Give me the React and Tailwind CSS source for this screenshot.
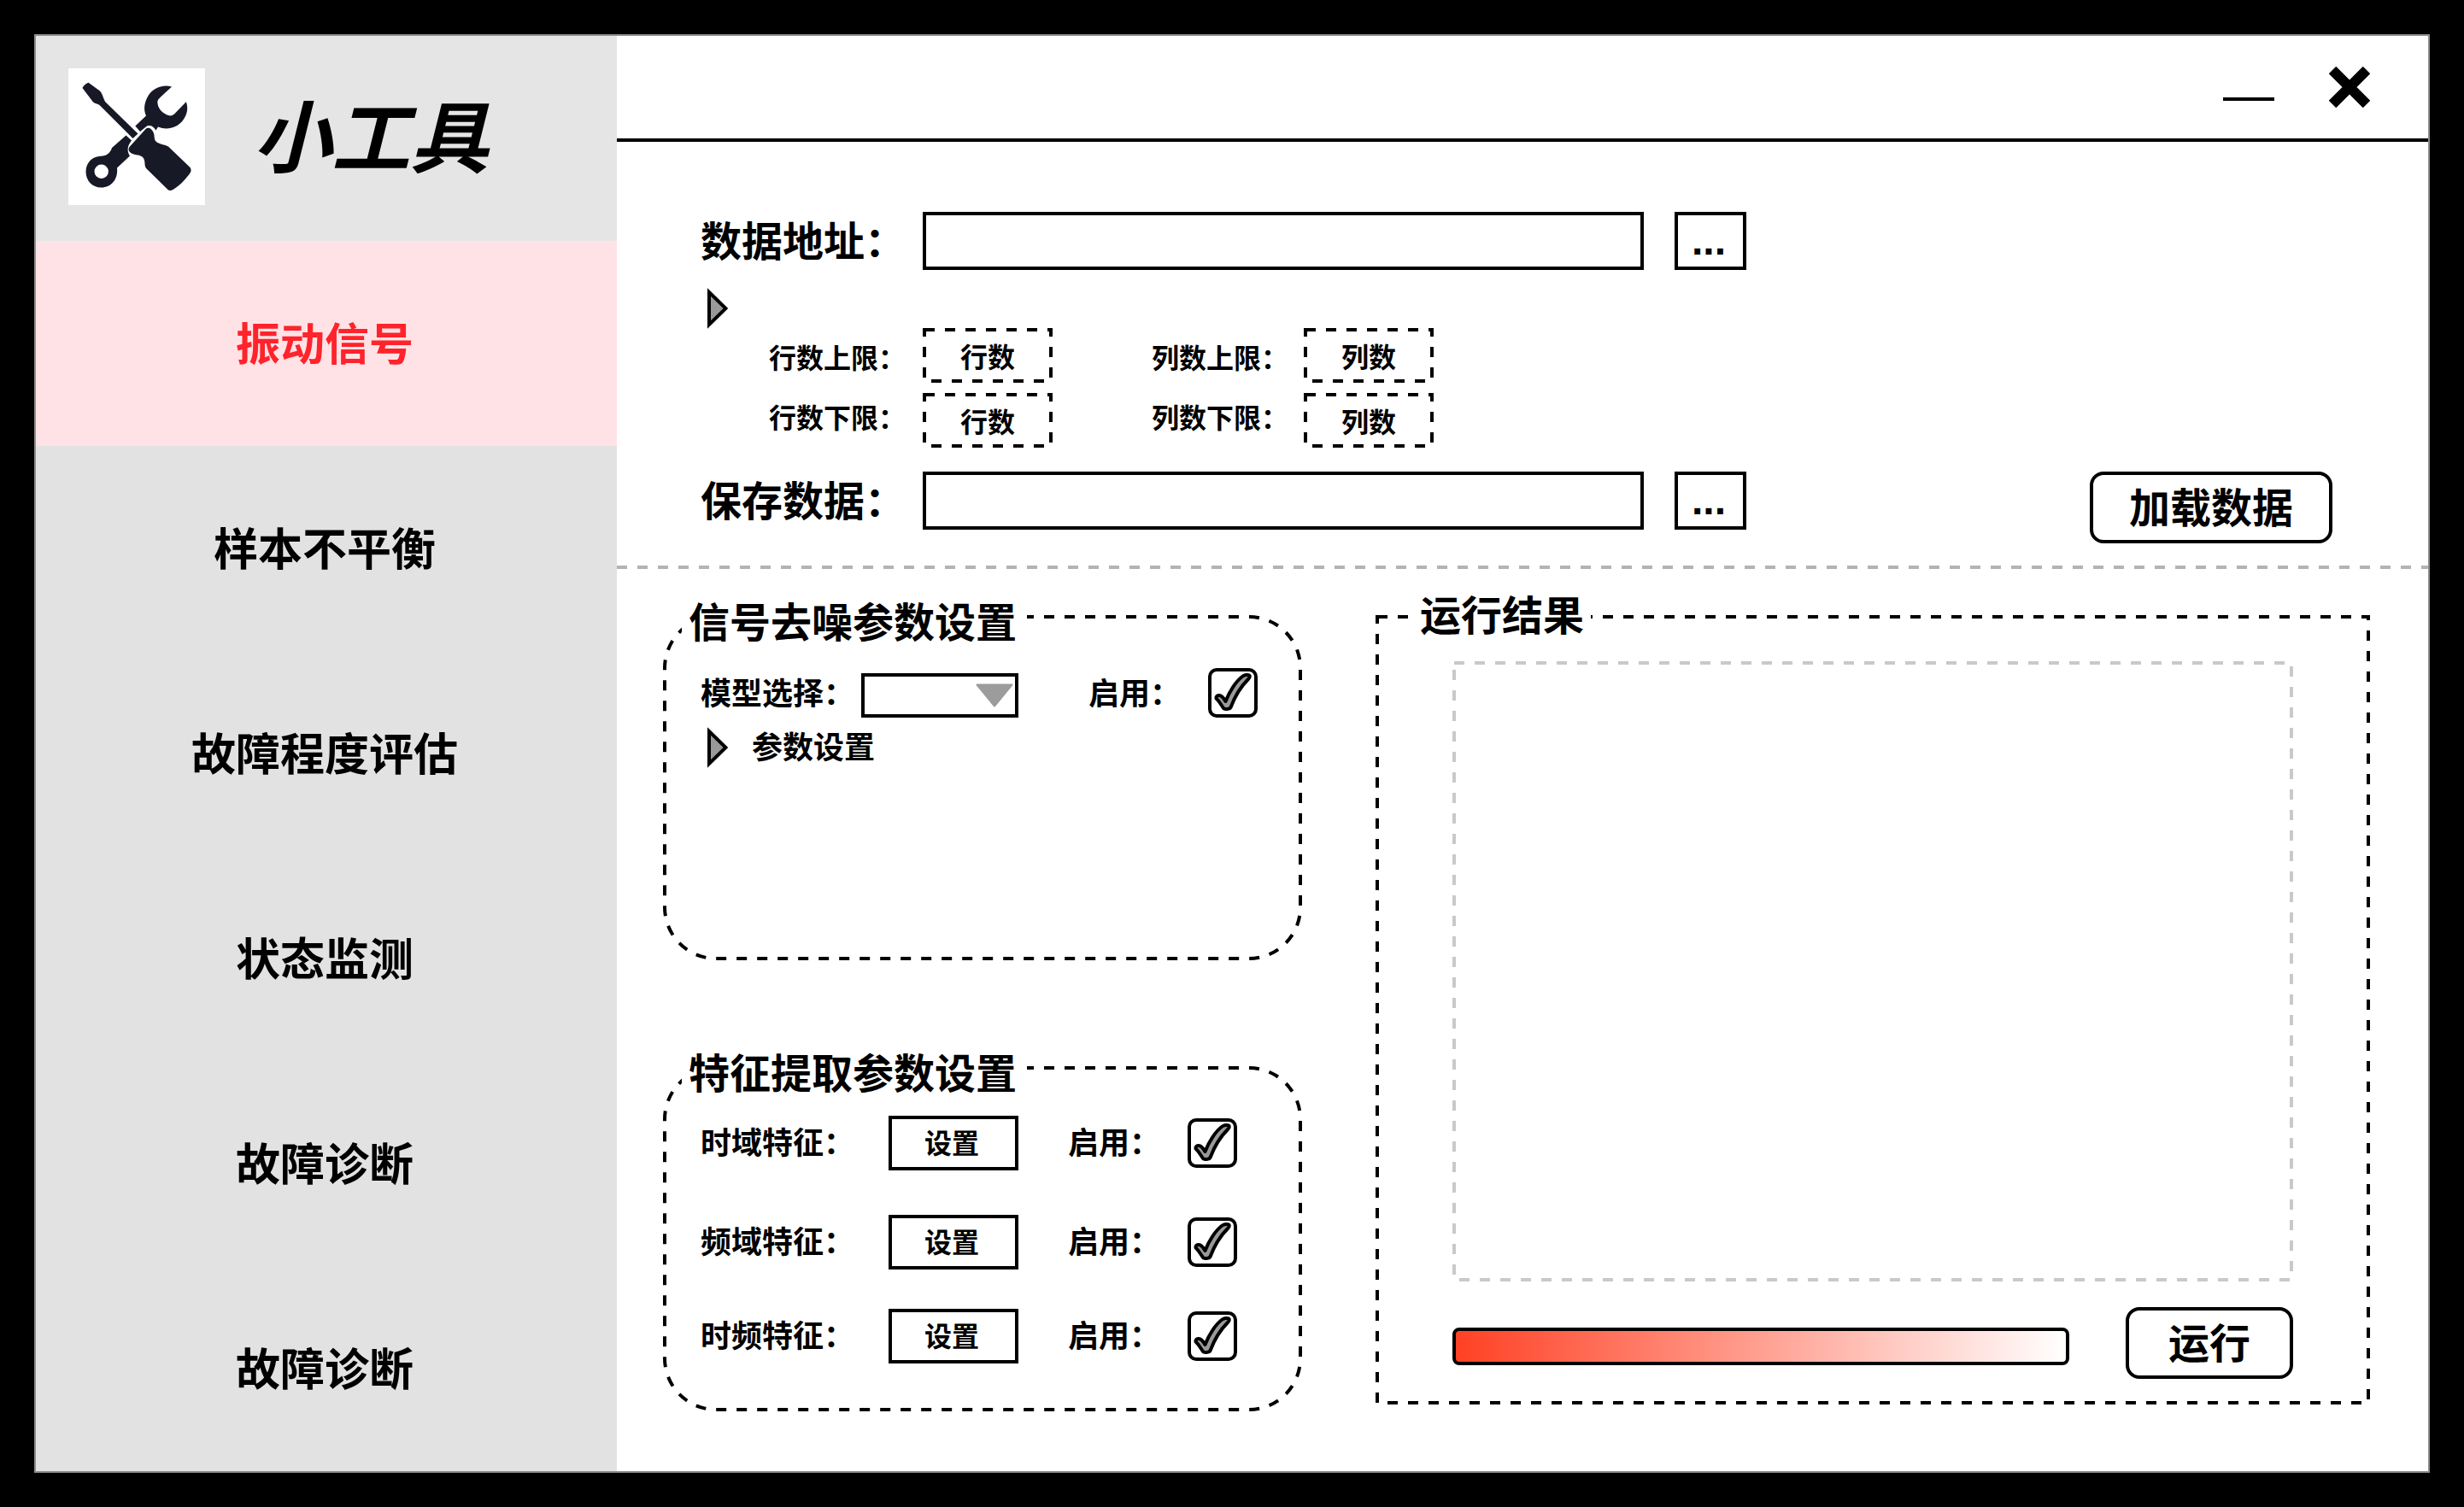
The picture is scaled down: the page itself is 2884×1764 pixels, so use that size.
import { useState } from "react";

const NAV_ITEMS = ["振动信号", "样本不平衡", "故障程度评估", "状态监测", "故障诊断", "故障诊断"];

const FEATURES = [
  { id: "time", label: "时域特征：" },
  { id: "frequency", label: "频域特征：" },
  { id: "time-frequency", label: "时频特征：" },
];

/* Dashed outline drawn around its positioned parent. */
function DashedOutline({ radius = 0, className = "stroke-black" }) {
  return (
    <svg aria-hidden="true" className={`pointer-events-none absolute inset-0 size-full ${className}`}>
      <rect
        x="2"
        y="2"
        rx={radius}
        fill="none"
        strokeWidth="4"
        strokeDasharray="12 12"
        style={{ width: "calc(100% - 4px)", height: "calc(100% - 4px)" }}
      />
    </svg>
  );
}

function ToolsLogo() {
  return (
    <svg viewBox="0 0 160 160" className="size-40 shrink-0 bg-white" role="img" aria-label="小工具">
      <g fill="#171926">
        <path d="M121 21.4C109 18.5 98 24 93 33C88.5 41 88 49 91 55.5L78.3 67.5L84 74L92 67.5C96 66 100 68 102.5 72.5L105 68.6C116 73 127 69.500 134 61C139.500 54 140.500 46 137.800 39.300L124 53.500C121.500 56 118 56 114.500 54C109 51 104.500 46.500 104.300 39.300C104.500 37 106 35.500 107.500 34Z" />
        <path
          fillRule="evenodd"
          d="M67.500 78.600L74 84.500C68 92 69 98 72 102.500L57 116.500C58.500 130 50 139.500 38.500 139.500C28 139.500 20.500 131.500 20.500 121C20.500 110.500 28 103 38 102.800C45 102.500 49 99 51 93ZM38.700 112.500A8.200 8.200 0 1 0 38.700 128.900A8.200 8.200 0 1 0 38.700 112.500Z"
        />
        <path d="M23.600 16.800L37 26.500C40.500 30 41 37 44 40L81.500 76.500L75.500 82L37 43.500C35 41.500 31.500 41.500 29 39.600L16.500 23C17.500 20.500 21 17.500 23.600 16.800Z" />
        <path d="M91 70.500C93.500 68.800 96.500 70 98.500 73C102 78.500 99.500 82.500 102.500 85.500C106 89 113 89 117 91.500L142.500 116C144.500 119 143.500 121.500 141.500 124C136 131 129.500 138 122 142.300C120 143.300 118 143.300 116.500 142L91 117C88.500 113.500 90.500 108 87.500 104.500C84 100.500 78.500 102 74 99.500C71 97.500 69.500 95.500 71.500 92Z" />
      </g>
    </svg>
  );
}

function Checkbox({ id }) {
  return (
    <span className="grid size-[58px] shrink-0">
      <input
        id={id}
        type="checkbox"
        defaultChecked
        className="peer col-start-1 row-start-1 size-full appearance-none rounded-[10px] border-4 border-black bg-white"
      />
      <svg
        aria-hidden="true"
        viewBox="0 0 58 58"
        className="pointer-events-none invisible col-start-1 row-start-1 size-full peer-checked:visible"
      >
        <path
          d="M12.500 32C15.500 31.500 18 34.500 20.500 39C25 27 33 15 40.500 9.500C42.500 8 46.500 7.500 48.300 8.500C49.500 9.500 48.500 11.500 47 13C38 22 31 34 26.500 46C25.500 48 21 48.500 18.500 47.500C15.500 44 13.500 39 9.500 35.500C9 33.500 10.500 32.300 12.500 32Z"
          fill="#999999"
          stroke="black"
          strokeWidth="4"
          strokeLinejoin="round"
        />
      </svg>
    </span>
  );
}

function DisclosureButton({ label }) {
  return (
    <button type="button" aria-label={label} aria-expanded="false" className="block shrink-0">
      <svg aria-hidden="true" viewBox="0 0 24 50" className="h-[50px] w-6">
        <path d="M2 6L21.500 25L2 44Z" fill="#999999" stroke="black" strokeWidth="4" strokeMiterlimit="10" />
      </svg>
    </button>
  );
}

function PathRow({ id, label }) {
  return (
    <div className="flex items-center">
      <label htmlFor={id} className="w-[260px] shrink-0 text-5xl/[64px]">
        {label}
      </label>
      <input id={id} type="text" className="h-[68px] min-w-0 flex-1 border-4 border-black bg-white px-4 text-[32px]" />
      <button
        type="button"
        aria-label={`${label}浏览`}
        className="ml-9 h-[68px] w-[84px] shrink-0 border-4 border-black bg-white pr-1 font-['Liberation_Sans',sans-serif] text-5xl/[60px]"
      >
        ...
      </button>
    </div>
  );
}

function LimitFields({ name, unit, labelClass }) {
  const limits = ["上限", "下限"];
  return (
    <div className="flex items-center text-[32px]">
      <div className={`flex shrink-0 flex-col ${labelClass}`}>
        {limits.map((limit) => (
          <label key={limit} htmlFor={`${name}-${limit}`} className="leading-[70px]">
            {unit}
            {limit}：
          </label>
        ))}
      </div>
      <div className="flex flex-col gap-3">
        {limits.map((limit) => (
          <div key={limit} className="relative">
            <input
              id={`${name}-${limit}`}
              type="text"
              defaultValue={unit}
              className="block h-16 w-[152px] bg-white text-center"
            />
            <DashedOutline />
          </div>
        ))}
      </div>
    </div>
  );
}

function Panel({ title, children }) {
  return (
    <section className="relative min-h-[404px] px-11">
      <DashedOutline radius={60} />
      <h2 className="relative -mx-[22px] -mt-4 w-fit bg-white pr-3 pl-2 text-5xl/[48px]">{title}</h2>
      {children}
    </section>
  );
}

export default function App() {
  const [active, setActive] = useState(0);

  return (
    <div className="flex min-h-screen bg-black p-10 font-['Noto_Sans','Noto_Sans_CJK_SC',sans-serif] font-bold text-black">
      <div className="grid flex-1 grid-cols-[17fr_53fr] border-2 border-[#8c8c8c] bg-white">
        <aside className="flex flex-col bg-[#e2e2e2]">
          <header className="flex flex-1 basis-0 flex-col justify-center bg-[#e5e5e5] pl-[38px]">
            <div className="flex items-center gap-14 pb-1">
              <ToolsLogo />
              <h1 className="text-[92px]/[92px] italic">小工具</h1>
            </div>
          </header>
          <nav className="flex flex-[6] basis-0 flex-col">
            {NAV_ITEMS.map((item, index) => (
              <button
                key={index}
                type="button"
                onClick={() => setActive(index)}
                aria-current={index === active ? "page" : undefined}
                className={`flex-1 pr-1 text-[52px]/[60px] ${index === active ? "bg-[#ffe2e5] text-[#ff232b]" : ""}`}
              >
                {item}
              </button>
            ))}
          </nav>
        </aside>

        <main className="flex min-w-0 flex-col">
          <header className="flex h-[124px] shrink-0 items-center justify-end gap-16 border-b-4 border-black pr-[68px]">
            <button type="button" aria-label="最小化" className="flex h-12 w-[60px] items-center pt-7">
              <span className="h-1 w-full bg-black" />
            </button>
            <button type="button" aria-label="关闭">
              <svg aria-hidden="true" viewBox="0 0 48 48" className="size-12">
                <path d="M4 4L44 44M44 4L4 44" stroke="black" strokeWidth="12" />
              </svg>
            </button>
          </header>

          <section className="flex items-end justify-between gap-10 pt-[82px] pr-28 pb-[26px] pl-[98px]">
            <form className="w-full max-w-[1224px] pb-4" onSubmit={(event) => event.preventDefault()}>
              <PathRow id="data-path" label="数据地址：" />
              <div className="mt-5 mb-7 flex items-start pl-2">
                <DisclosureButton label="展开范围设置" />
                <div className="flex gap-[116px] pt-12 pl-12">
                  <LimitFields name="rows" unit="行数" labelClass="w-[180px]" />
                  <LimitFields name="columns" unit="列数" labelClass="w-[178px]" />
                </div>
              </div>
              <PathRow id="save-path" label="保存数据：" />
            </form>
            <button
              type="button"
              className="h-[84px] w-[284px] shrink-0 rounded-2xl border-4 border-black bg-white text-5xl/[64px]"
            >
              加载数据
            </button>
          </section>

          <div className="h-1 shrink-0 bg-[repeating-linear-gradient(90deg,#b3b3b3_0_12px,transparent_12px_24px)]" />

          <div className="grid grid-cols-[187fr_291fr] gap-[86px] pt-[54px] pr-[68px] pb-[70px] pl-[54px]">
            <div className="flex min-w-0 flex-col gap-[124px]">
              <Panel title="信号去噪参数设置">
                <div className="mt-[30px] flex items-end text-[36px]/[56px]">
                  <label htmlFor="model" className="w-[188px] shrink-0">
                    模型选择：
                  </label>
                  <div className="grid w-[184px]">
                    <select
                      id="model"
                      className="col-start-1 row-start-1 h-[52px] w-full appearance-none border-4 border-black bg-white px-3 text-2xl"
                    />
                    <svg
                      aria-hidden="true"
                      viewBox="0 0 44 28"
                      className="pointer-events-none col-start-1 row-start-1 mr-1.5 h-7 w-11 self-center justify-self-end"
                    >
                      <path
                        d="M1.500 1.500H42.500L22 26.500Z"
                        fill="#9c9c9c"
                        stroke="#9c9c9c"
                        strokeWidth="2"
                        strokeLinejoin="round"
                      />
                    </svg>
                  </div>
                  <label htmlFor="denoise-enabled" className="ml-[82px] w-[140px] shrink-0">
                    启用：
                  </label>
                  <Checkbox id="denoise-enabled" />
                </div>
                <div className="mt-2.5 flex items-center gap-7 pl-2">
                  <DisclosureButton label="展开参数设置" />
                  <h3 className="text-[36px]/[48px]">参数设置</h3>
                </div>
              </Panel>

              <Panel title="特征提取参数设置">
                <ul className="mt-[26px] grid grid-rows-[116px_110px_64px] text-[36px]/[64px]">
                  {FEATURES.map(({ id, label }) => (
                    <li key={id} className="flex h-16 items-center">
                      <span className="w-[220px] shrink-0">{label}</span>
                      <button
                        type="button"
                        aria-label={`${label}设置`}
                        className="h-16 w-[152px] border-4 border-black bg-white pr-1 text-[32px]/[56px]"
                      >
                        设置
                      </button>
                      <label htmlFor={`${id}-enabled`} className="ml-[58px] w-[140px] shrink-0">
                        启用：
                      </label>
                      <Checkbox id={`${id}-enabled`} />
                    </li>
                  ))}
                </ul>
              </Panel>
            </div>

            <section className="relative mb-2 flex min-w-0 flex-col px-[90px] pb-[30px]">
              <DashedOutline />
              <h2 className="relative -mt-6 -ml-[46px] w-fit bg-white px-2 text-5xl/[48px]">运行结果</h2>
              <div className="relative mt-[30px] flex-1">
                <DashedOutline className="stroke-[#c9c9c9]" />
              </div>
              <div className="mt-[30px] flex items-end gap-[66px]">
                <div
                  role="progressbar"
                  aria-label="运行进度"
                  className="mb-4 h-11 flex-1 rounded-lg border-4 border-black bg-linear-to-r/srgb from-[#ff4124] to-white"
                />
                <button
                  type="button"
                  className="h-[84px] w-[196px] shrink-0 rounded-2xl border-4 border-black bg-white text-5xl/[64px]"
                >
                  运行
                </button>
              </div>
            </section>
          </div>
        </main>
      </div>
    </div>
  );
}
